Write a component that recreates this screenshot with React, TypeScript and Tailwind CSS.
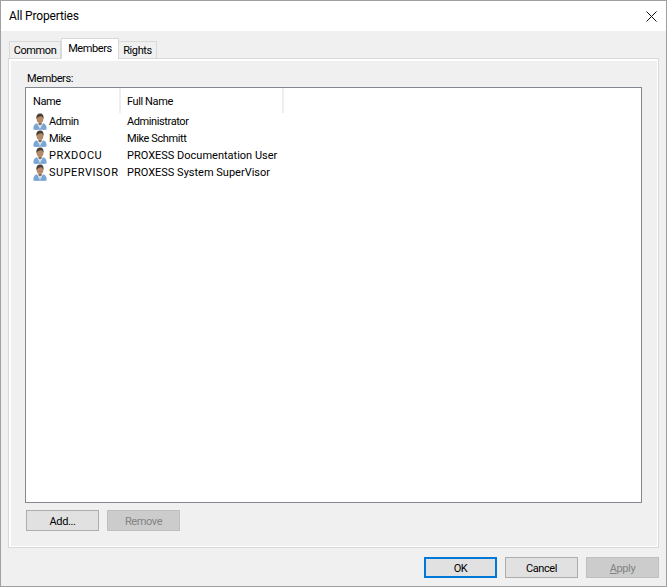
const members = [
  { name: 'Admin', fullName: 'Administrator', nameCls: 'tracking-[-0.4px]', fullCls: 'tracking-[-0.4px]' },
  { name: 'Mike', fullName: 'Mike Schmitt', nameCls: 'tracking-[-0.4px]', fullCls: 'tracking-[-0.4px]' },
  { name: 'PRXDOCU', fullName: 'PROXESS Documentation User', nameCls: 'tracking-[0.5px]', fullCls: 'tracking-normal' },
  { name: 'SUPERVISOR', fullName: 'PROXESS System SuperVisor', nameCls: 'tracking-[0.5px]', fullCls: 'tracking-normal' },
]

function UserIcon() {
  return (
    <svg width="15" height="17" viewBox="0 0 15 17" className="shrink-0">
      <path d="M.5 16.500c-.5-3 .5-5 3-6.300l3.500 1.800 3.500-1.800c2.500 1 3.500 3.300 3 6.300-1.500.5-3 .5-4.500.2H5c-1.500.3-3 .3-4.500-.2z" fill="#7ba6d4" />
      <path d="M4 10.500l3 5.500 3-5.500-3 1.500z" fill="#d6e4f2" />
      <ellipse cx="7" cy="5.500" rx="3.400" ry="4.600" fill="#b58a68" />
      <path d="M3.500 6C3 2.200 4.800.5 7.200.5c2.500 0 3.800 2 3.200 5.500-.4-1.700-1-2.600-2.200-2.800-1.500.5-3.700.8-4.700 2.800z" fill="#4a4038" />
      <path d="M5.500 9.500c1 .8 2.200.8 3.200 0v1.700L7 12.300l-1.500-1.100z" fill="#8a6448" />
    </svg>
  )
}

function DialogButton({ label, disabled, primary }: { label: React.ReactNode; disabled?: boolean; primary?: boolean }) {
  const cls = disabled
    ? 'border-[#bfbfbf] bg-[#cccccc] text-[#838383]'
    : primary
      ? 'border-2 border-[#0078d7] bg-[#e1e1e1] text-black'
      : 'border-[#adadad] bg-[#e1e1e1] text-black'
  return (
    <button className={`h-[21px] w-[73px] border pt-[2px] leading-none ${cls}`}>{label}</button>
  )
}

export default function App() {
  return (
    <div className="flex h-[587px] w-[667px] flex-col border border-[#a0a0a0] bg-[#f0f0f0] font-['Roboto','Noto_Sans',sans-serif] text-[11px] tracking-[-0.4px] text-black">
      {/* Title bar */}
      <div className="flex h-[30px] shrink-0 items-center justify-between bg-white pl-[8px] pr-[9px]">
        <span className="text-[12px] tracking-[-0.15px]">All Properties</span>
        <svg width="11" height="11" viewBox="0 0 11 11">
          <path d="M.5.5l10 10M10.500.5l-10 10" stroke="#111" strokeWidth="1" fill="none" />
        </svg>
      </div>

      {/* Tabs */}
      <div className="flex h-[27px] shrink-0 items-end pl-[8px]">
        <div className="flex h-[17px] w-[52px] items-center justify-center border border-b-0 border-[#d9d9d9] bg-[#f0f0f0] pt-[3px]">Common</div>
        <div className="z-10 -mb-px flex h-[21px] w-[58px] items-center justify-center border border-b-0 border-[#d9d9d9] bg-white">Members</div>
        <div className="flex h-[17px] w-[38px] items-center justify-center border border-b-0 border-l-0 border-[#d9d9d9] bg-[#f0f0f0] pt-[3px]">Rights</div>
      </div>

      {/* Tab panel */}
      <div className="mx-[7px] flex h-[490px] shrink-0 flex-col border border-[#d9d9d9] bg-[#f0f0f0] shadow-[inset_2px_2px_0_#ffffff,inset_-1px_-1px_0_#ffffff] px-[16px]">
        <div className="mt-[12px] h-[16px] leading-[16px] pl-[2px]">Members:</div>
        <div className="h-[416px] shrink-0 border border-[#828790] bg-white">
          <div className="flex h-[25px]">
            <div className="w-[95px] border-r-2 border-[#eeeeee] pl-[7px] pt-[6px]">Name</div>
            <div className="w-[163px] border-r-2 border-[#eeeeee] pl-[6px] pt-[6px]">Full Name</div>
          </div>
          <div className="flex flex-col">
            {members.map((m) => (
              <div key={m.name} className="flex h-[17px] items-center">
                <div className="flex w-[95px] items-center gap-[1px] pl-[7px]">
                  <UserIcon />
                  <span className={`whitespace-nowrap pt-[2px] ${m.nameCls}`}>{m.name}</span>
                </div>
                <span className={`whitespace-nowrap pl-[6px] pt-[2px] ${m.fullCls}`}>{m.fullName}</span>
              </div>
            ))}
          </div>
        </div>
        <div className="mt-[7px] ml-px flex gap-[8px]">
          <DialogButton label="Add..." />
          <DialogButton label="Remove" disabled />
        </div>
      </div>

      {/* Footer buttons */}
      <div className="mt-[9px] flex justify-end gap-[8px] pr-[7px]">
        <DialogButton label="OK" primary />
        <DialogButton label="Cancel" />
        <DialogButton label={<span><span className="underline">A</span>pply</span>} disabled />
      </div>
    </div>
  )
}
